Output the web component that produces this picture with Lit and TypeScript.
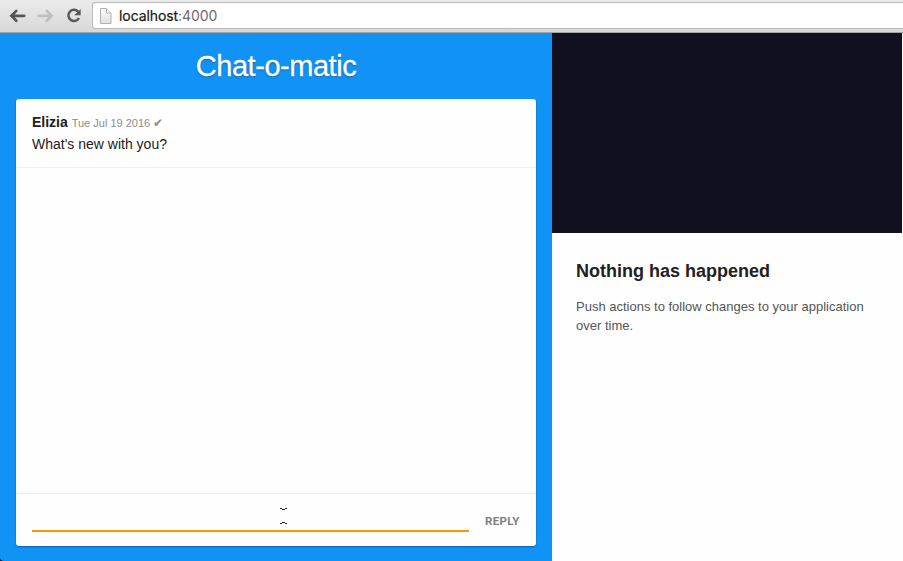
import { LitElement, html, css } from "lit";
import { customElement, property } from "lit/decorators.js";

@customElement("browser-bar")
class BrowserBar extends LitElement {
  @property() host = "localhost";
  @property() port = ":4000";

  static styles = css`
    :host {
      display: flex;
      align-items: center;
      box-sizing: border-box;
      flex: none;
      height: 33px;
      padding-left: 8px;
      background: linear-gradient(#ebebeb, #d8d8d8);
      border-bottom: 1px solid #a5a5a5;
      font-family: Inter, Roboto, sans-serif;
    }
    svg { display: block; flex: none; }
    .nav { display: flex; gap: 8px; }
    .address {
      flex: 1;
      display: flex;
      align-items: center;
      box-sizing: border-box;
      height: 27px;
      margin: -1px 0 0 8px;
      padding-left: 6px;
      background: #fff;
      border: 1px solid #bbb;
      border-right: 0;
      border-radius: 3px 0 0 3px;
      font-size: 14px;
      line-height: 24px;
      letter-spacing: -0.08px;
      color: #6b6b6b;
    }
    .url { margin-left: 7px; white-space: nowrap; }
    .host { color: #161616; -webkit-text-stroke: 0.2px #161616; }
  `;

  render() {
    return html`
      <div class="nav">
        <svg width="20" height="20" viewBox="0 0 20 20" fill="none" stroke="#555" stroke-width="2.7" stroke-linecap="round">
          <path d="M16.2 9.8H4M8.3 4.9L3.4 9.8l4.9 4.9" />
        </svg>
        <svg width="20" height="20" viewBox="0 0 20 20" fill="none" stroke="#bfbfbf" stroke-width="2.7" stroke-linecap="round">
          <path d="M2.6 9.8H15M10.7 4.9l4.9 4.9-4.9 4.9" />
        </svg>
        <svg width="20" height="20" viewBox="0 0 20 20">
          <path d="M14.4 5.9A5.6 5.6 0 1 0 15 12" fill="none" stroke="#585858" stroke-width="2.5" />
          <path d="M16.7 3v6.3h-6.5z" fill="#585858" />
        </svg>
      </div>
      <div class="address">
        <svg width="13" height="16" viewBox="0 0 13 16">
          <defs>
            <linearGradient id="page" x2="0" y2="1">
              <stop stop-color="#fdfdfd" /><stop offset="1" stop-color="#e0e0e0" />
            </linearGradient>
          </defs>
          <path d="M1.5.5h6l4.5 4.5v10.5H1.5z" fill="url(#page)" stroke="#b0b0b0" />
          <path d="M7.5.5v4.5h4.5" fill="#fff" stroke="#b0b0b0" />
        </svg>
        <span class="url"><span class="host">${this.host}</span>${this.port}</span>
      </div>
    `;
  }
}

@customElement("chat-panel")
class ChatPanel extends LitElement {
  static styles = css`
    :host {
      display: flex;
      flex-direction: column;
      box-sizing: border-box;
      width: 552px;
      padding: 0 16px 15px;
      background: #1193f5;
      color: #212121;
    }
    h1 {
      flex: none;
      margin: 0;
      height: 66px;
      line-height: 67px;
      text-align: center;
      font-size: 29px;
      letter-spacing: -0.47px;
      font-weight: 400;
      color: #fff;
      -webkit-text-stroke: 0.3px #fff;
      text-shadow: 0 1px 2px rgba(0, 0, 0, 0.35);
    }
    .card {
      flex: 1;
      display: flex;
      flex-direction: column;
      background: #fefefe;
      border-radius: 3px;
      box-shadow: 0 1px 2px rgba(0, 0, 0, 0.35);
    }
    .message {
      box-sizing: border-box;
      height: 69px;
      padding: 12px 16px 0;
      border-bottom: 1px solid #eee;
      font-size: 14px;
      line-height: 22px;
    }
    .text { line-height: 20px; }
    .meta { font-size: 11px; color: #8c8c8c; }
    .check { font-size: 12px; line-height: 1; }
    .space { flex: 1; }
    .reply {
      display: flex;
      box-sizing: border-box;
      height: 53px;
      padding: 0 16px;
      border-top: 1px solid #eee;
    }
    .field {
      flex: 1;
      box-sizing: border-box;
      height: 38px;
      padding: 14px 0 0 248px;
      border-bottom: 2px solid #ff9800;
    }
    .field svg { display: block; }
    .send {
      width: 35px;
      margin-left: 16px;
      font: 700 11.5px/55px Roboto, sans-serif;
      letter-spacing: 0.3px;
      color: #808080;
    }
  `;

  render() {
    return html`
      <h1>Chat-o-matic</h1>
      <div class="card">
        <div class="message">
          <div><b>Elizia</b> <span class="meta">Tue Jul 19 2016 <span class="check">✔</span></span></div>
          <div class="text">What's new with you?</div>
        </div>
        <div class="space"></div>
        <div class="reply">
          <div class="field">
            <svg width="8" height="17" viewBox="0 0 8 17" fill="none" stroke="#222" stroke-width="1">
              <path d="M0 .5h2M5 .5h2M2 1.5h3M0 15.5h2M5 15.5h2M2 14.5h3" />
            </svg>
          </div>
          <div class="send">REPLY</div>
        </div>
      </div>
    `;
  }
}

@customElement("history-panel")
class HistoryPanel extends LitElement {
  static styles = css`
    :host { display: block; flex: 1; background: #fefefe; }
    .timeline { height: 200px; margin-right: 1px; background: #111020; }
    .info { padding: 24px 24px 0; }
    h2 { margin: 0; font-size: 18px; line-height: 28px; color: #212121; }
    p { margin: 12px 0 0; font-size: 13px; line-height: 19px; color: #555; }
  `;

  render() {
    return html`
      <div class="timeline"></div>
      <div class="info">
        <h2>Nothing has happened</h2>
        <p>Push actions to follow changes to your application over time.</p>
      </div>
    `;
  }
}

@customElement("app-root")
class AppRoot extends LitElement {
  static styles = css`
    :host {
      display: flex;
      flex-direction: column;
      height: 561px;
      overflow: hidden;
      font-family: "Liberation Sans", Arial, sans-serif;
    }
    .page { flex: 1; display: flex; background: #111; }
    chat-panel { border-bottom-left-radius: 4px; }
  `;

  render() {
    return html`
      <browser-bar></browser-bar>
      <div class="page">
        <chat-panel></chat-panel>
        <history-panel></history-panel>
      </div>
    `;
  }
}
